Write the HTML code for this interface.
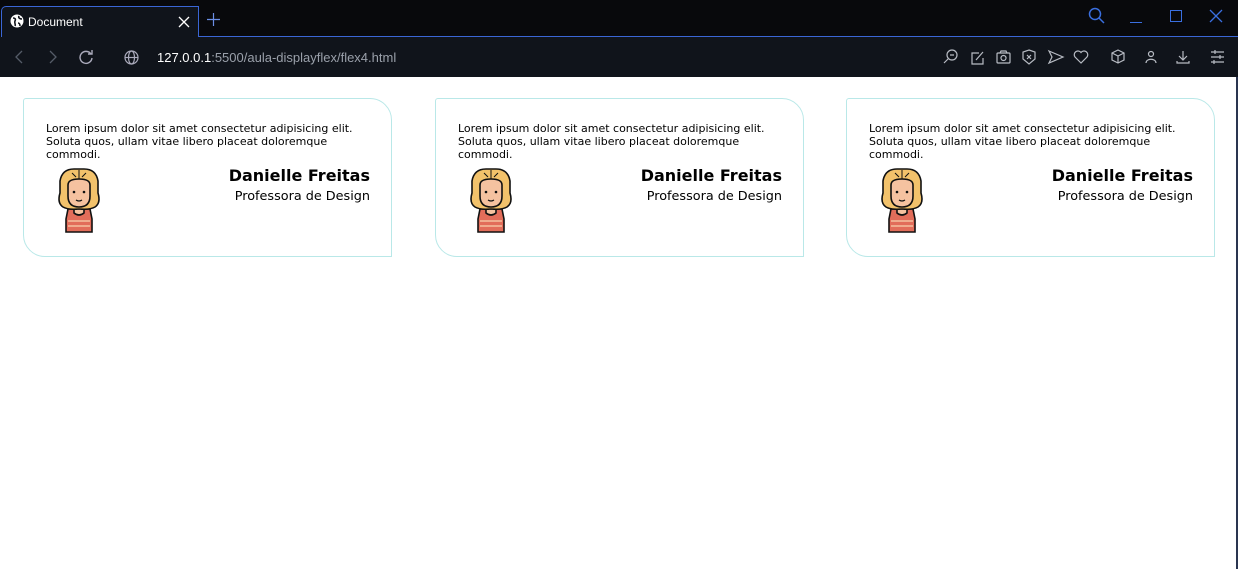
<!DOCTYPE html>
<html><head><meta charset="utf-8"><style>
*{margin:0;padding:0;box-sizing:border-box}
body{width:1238px;height:569px;overflow:hidden;background:#fff;font-family:"DejaVu Sans",Verdana,sans-serif;position:relative}
.tabbar{position:absolute;left:0;top:0;width:1238px;height:37px;background:#08090c}
.tab{position:absolute;left:1px;top:6px;width:198px;height:32px;background:#10141b;border:1px solid #3a66d6;border-bottom:none;border-radius:5px 0 0 0}
.tab .t{position:absolute;left:26px;top:8px;color:#fff;font:12px "Liberation Sans",sans-serif}
.toolbar{position:absolute;left:0;top:37px;width:1238px;height:40px;background:#10141b}
.line{position:absolute;left:199px;top:36px;width:1039px;height:1px;background:#3a66d6}
.url{position:absolute;left:157px;top:50px;font:13px "Liberation Sans",sans-serif;color:#9aa0aa}
.url b{color:#fff;font-weight:normal}
svg.i{position:absolute}
.card{position:absolute;top:98px;width:369px;height:159px;border:1px solid #b9e8e8;border-radius:3px 22px 0 22px}
.card p{position:absolute;left:22px;top:23px;width:330px;font-size:11px;line-height:13px;color:#000}
.card h2{position:absolute;right:21px;top:67px;font-size:16px;font-weight:bold}
.card .r{position:absolute;right:21px;top:90px;font-size:12.8px}
.card svg{position:absolute;left:30px;top:64px}
.edge{position:absolute;left:1236px;top:77px;width:2px;height:492px;background:#2a3550}
</style></head><body>
<div class="tabbar"></div>
<div class="tab"><svg class="i" style="left:8px;top:7px" width="14" height="14" viewBox="0 0 14 14"><circle cx="7" cy="7" r="6.5" fill="#fff"/><path d="M3 4c2 0 3 1 2 3s1 3 0 5M9 2c-1 2 1 3 3 3M8 9c1 0 2 1 2 3" stroke="#10141b" stroke-width="1.6" fill="none"/></svg><span class="t">Document</span>
<svg class="i" style="left:176px;top:9px" width="12" height="12"><path d="M1 1L11 11M11 1L1 11" stroke="#fff" stroke-width="1.3"/></svg></div>
<div class="line"></div>
<svg class="i" style="left:207px;top:13px" width="13" height="13"><path d="M6.5 0V13M0 6.5H13" stroke="#6b8fe6" stroke-width="1.2"/></svg>
<svg class="i" style="left:1088px;top:7px" width="18" height="18"><circle cx="7" cy="7" r="5.5" stroke="#3a6fe0" stroke-width="1.5" fill="none"/><path d="M11 11L16 16" stroke="#3a6fe0" stroke-width="1.5"/></svg>
<div style="position:absolute;left:1130px;top:22px;width:12px;height:1px;background:#3a6fe0"></div>
<div style="position:absolute;left:1170px;top:10px;width:12px;height:12px;border:1.3px solid #3a6fe0"></div>
<svg class="i" style="left:1209px;top:9px" width="14" height="14"><path d="M1 1L13 13M13 1L1 13" stroke="#3a6fe0" stroke-width="1.3"/></svg>
<div class="toolbar"></div>
<svg class="i" style="left:14px;top:50px" width="10" height="14"><path d="M8 1L2 7L8 13" stroke="#555c68" stroke-width="1.3" fill="none"/></svg>
<svg class="i" style="left:48px;top:50px" width="10" height="14"><path d="M2 1L8 7L2 13" stroke="#555c68" stroke-width="1.3" fill="none"/></svg>
<svg class="i" style="left:79px;top:50px" width="15" height="15"><path d="M12 4A6 6 0 1 0 13 8" stroke="#aab" stroke-width="1.4" fill="none"/><path d="M9 4H13V0" stroke="#aab" stroke-width="1.4" fill="none"/></svg>
<svg class="i" style="left:124px;top:50px" width="15" height="15"><circle cx="7.5" cy="7.5" r="6.5" stroke="#aab" fill="none" stroke-width="1.2"/><ellipse cx="7.5" cy="7.5" rx="3" ry="6.5" stroke="#aab" fill="none" stroke-width="1.2"/><path d="M1 7.5H14" stroke="#aab" stroke-width="1.2"/></svg>
<div class="url"><b>127.0.0.1</b>:5500/aula-displayflex/flex4.html</div>
<svg class="i" style="left:943px;top:49px" width="290" height="16" viewBox="0 0 290 16" fill="none" stroke="#b8bcc4" stroke-width="1.2">
<circle cx="9" cy="6" r="5"/><path d="M5 10L1 14M7 6H11"/>
<path d="M36 4H29V15H40V9M33 11L40 3"/>
<rect x="54" y="4" width="13" height="10" rx="1"/><circle cx="60.5" cy="9" r="2.5"/><path d="M57 4L58 2H63L64 4"/>
<path d="M86 1L92 3V10L86 15L80 10V3Z"/><path d="M84 6L88 10M88 6L84 10"/>
<path d="M106 2L120 8L106 14L109 8Z"/>
<path d="M138 14L132 8A3.5 3.5 0 0 1 138 3.5A3.5 3.5 0 0 1 144 8Z"/>
<path d="M175 1L181 4V11L175 14L169 11V4ZM169 4L175 7L181 4M175 7V14"/>
<circle cx="208" cy="5" r="2.5"/><path d="M203 14C203 9 213 9 213 14"/>
<path d="M240 2V10M236 7L240 11L244 7M234 12V14H246V12"/>
<path d="M268 3H281M268 8H281M268 13H281M272 1V5M277 6V10M271 11V15"/>
</svg>
<div class="edge"></div>

<div class="card" style="left:23px">
<p>Lorem ipsum dolor sit amet consectetur adipisicing elit. Soluta quos, ullam vitae libero placeat doloremque commodi.</p>
<svg width="50" height="70" viewBox="0 0 50 70"><use href="#av"/></svg>
<h2>Danielle Freitas</h2><div class="r">Professora de Design</div></div>
<div class="card" style="left:435px">
<p>Lorem ipsum dolor sit amet consectetur adipisicing elit. Soluta quos, ullam vitae libero placeat doloremque commodi.</p>
<svg width="50" height="70" viewBox="0 0 50 70"><use href="#av"/></svg>
<h2>Danielle Freitas</h2><div class="r">Professora de Design</div></div>
<div class="card" style="left:846px">
<p>Lorem ipsum dolor sit amet consectetur adipisicing elit. Soluta quos, ullam vitae libero placeat doloremque commodi.</p>
<svg width="50" height="70" viewBox="0 0 50 70"><use href="#av"/></svg>
<h2>Danielle Freitas</h2><div class="r">Professora de Design</div></div>

<svg width="0" height="0" style="position:absolute"><defs><g id="av" stroke="#111" stroke-width="1.6">
<path d="M12 56L14 46H36L38 56V69H12Z" fill="#e26d5a"/>
<path d="M14 58H36M14 63H36" stroke="#f5c2a0" stroke-width="1.5"/>
<path d="M20 44V50Q25 54 30 50V44Z" fill="#f5c2a0"/>
<path d="M9 44Q3 40 6 30V18Q8 6 20 6H30Q42 6 44 18V30Q47 40 41 44Q36 47 25 46Q14 47 9 44Z" fill="#f2c26b"/>
<path d="M14 22Q14 16 25 16Q36 16 36 22V33Q36 44 25 44Q14 44 14 33Z" fill="#f5c2a0"/>
<path d="M25 7V16M18 10L22 14M32 10L28 14" stroke-width="1"/>
<circle cx="20" cy="29" r="1.3" fill="#111" stroke="none"/><circle cx="30" cy="29" r="1.3" fill="#111" stroke="none"/>
<path d="M22 37Q25 39 28 37" fill="none" stroke-width="1.2"/>
</g></defs></svg>
</body></html>
